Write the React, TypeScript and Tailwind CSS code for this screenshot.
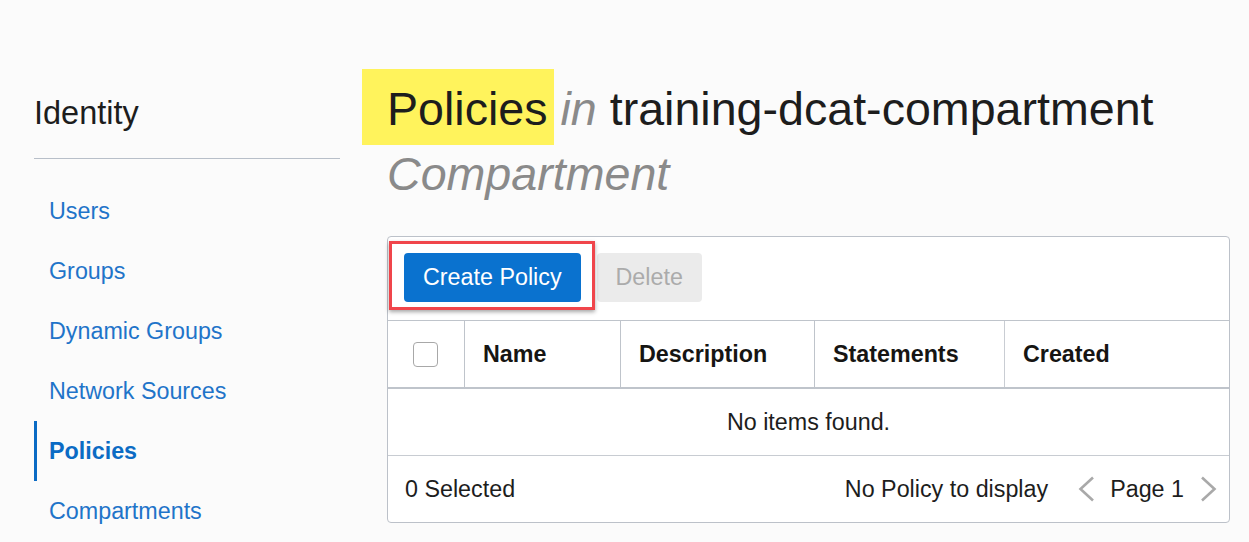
import React from "react";

const navItems = ["Users", "Groups", "Dynamic Groups", "Network Sources", "Policies", "Compartments"];

function Chevron({ dir }: { dir: "left" | "right" }) {
  return (
    <svg width="18" height="26" viewBox="0 0 18 26" fill="none">
      {dir === "left" ? (
        <polyline points="15,1.5 2.5,13 15,24.5" stroke="#a9a9a9" strokeWidth="2.6" strokeLinejoin="miter" />
      ) : (
        <polyline points="3,1.5 15.5,13 3,24.5" stroke="#a9a9a9" strokeWidth="2.6" strokeLinejoin="miter" />
      )}
    </svg>
  );
}

export default function App() {
  return (
    <div
      className="w-[1249px] h-[542px] overflow-hidden bg-[#fbfbfb] flex"
      style={{ fontFamily: '"Liberation Sans", Arial, sans-serif' }}
    >
      {/* Sidebar */}
      <aside className="ml-[34px] w-[306px] pt-[93px] shrink-0">
        <div className="text-[32.5px] leading-[40px] text-[#1d1d1d]">Identity</div>
        <div className="mt-[25px] h-px bg-[#b8bfc9]" />
        <nav className="mt-[22px] flex flex-col">
          {navItems.map((item) =>
            item === "Policies" ? (
              <div
                key={item}
                className="h-[60px] flex items-center border-l-[3px] border-[#0b6bc4] pl-[12px] text-[23.3px] font-bold text-[#0b6bc4]"
              >
                {item}
              </div>
            ) : (
              <div key={item} className="h-[60px] flex items-center pl-[15px] text-[23.3px] text-[#1f74c9]">
                {item}
              </div>
            )
          )}
        </nav>
      </aside>

      {/* Main */}
      <main className="ml-[47px] w-[843px] shrink-0 pt-[77px]">
        <h1 className="relative isolate text-[46.6px] leading-[65px] font-normal text-[#1d1d1d]">
          <div className="absolute -z-10 left-[-25px] top-[-8px] w-[192px] h-[76px] bg-[#fff35c]" />
          Policies <span className="italic text-[#8a8a8a]">in</span> training-dcat-compartment{" "}
          <span className="italic text-[#8a8a8a]">Compartment</span>
        </h1>

        <div className="mt-[29px] w-[843px] bg-white border border-[#bcc1c9] rounded-[4px]">
          {/* Toolbar */}
          <div className="relative flex items-center gap-[16px] pl-[16px] pt-[16px] pb-[18px]">
            <button className="h-[49px] px-[19px] rounded-[4px] bg-[#0a72cf] text-white text-[23.3px]">
              Create Policy
            </button>
            <button className="h-[49px] px-[19px] rounded-[4px] bg-[#ebebeb] text-[#ababab] text-[23.3px]">
              Delete
            </button>
            <div className="absolute left-[1px] top-[4px] w-[206px] h-[69px] border-[3px] border-[#f0454b] shadow-[0_2px_4px_rgba(0,0,0,0.35)]" />
          </div>

          {/* Header */}
          <div className="flex h-[69px] border-t border-b-2 border-[#bfc4cb] text-[23.3px] font-bold text-[#161513]">
            <div className="w-[77px] flex items-center pl-[25px] border-r border-[#bfc4cb]">
              <div className="w-[25px] h-[25px] rounded-[4px] border border-[#a8a8a8] bg-white" />
            </div>
            <div className="w-[156px] flex items-center pl-[18px] border-r border-[#bfc4cb]">Name</div>
            <div className="w-[194px] flex items-center pl-[18px] border-r border-[#bfc4cb]">Description</div>
            <div className="w-[190px] flex items-center pl-[18px] border-r border-[#c9cdd3]">Statements</div>
            <div className="flex-1 flex items-center pl-[18px]">Created</div>
          </div>

          {/* Body */}
          <div className="h-[67px] flex items-center justify-center border-b border-[#c8ccd2] text-[23.3px] text-[#1d1d1d]">
            No items found.
          </div>

          {/* Footer */}
          <div className="h-[66px] flex items-center pl-[17px] pr-[12px] text-[23.3px] text-[#1d1d1d]">
            <span>0 Selected</span>
            <span className="ml-auto">No Policy to display</span>
            <span className="ml-[30px] flex items-center">
              <Chevron dir="left" />
            </span>
            <span className="ml-[14px]">Page 1</span>
            <span className="ml-[15px] flex items-center">
              <Chevron dir="right" />
            </span>
          </div>
        </div>
      </main>
    </div>
  );
}
